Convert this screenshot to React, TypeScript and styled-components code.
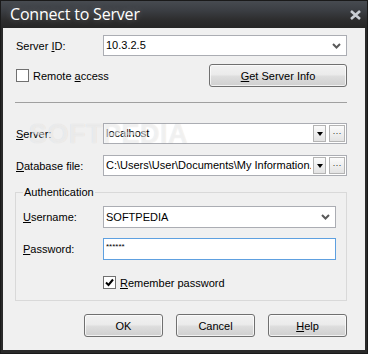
import styled, { createGlobalStyle } from 'styled-components'

const GlobalStyle = createGlobalStyle`
  html, body {
    margin: 0;
    padding: 0;
    background: #2b2b2b;
  }
  * {
    box-sizing: border-box;
  }
`

const Window = styled.div`
  width: 368px;
  height: 354px;
  display: flex;
  flex-direction: column;
  background: #2a2a2a;
  border: 1px solid #1a1a1a;
  font-family: 'Liberation Sans', Arial, sans-serif;
  font-size: 11px;
  color: #000;
`

const TitleBar = styled.div`
  height: 27px;
  flex: none;
  display: flex;
  align-items: center;
  justify-content: space-between;
  padding: 0 5px 2px 9px;
  background: linear-gradient(#474b51 0%, #3b3e43 35%, #2d2d2e 70%, #262626 100%);
`

const Title = styled.span`
  font-family: 'Open Sans', 'Noto Sans', sans-serif;
  font-size: 16px;
  color: #ffffff;
  text-shadow: 0 0 6px rgba(255, 255, 255, 0.25);
  letter-spacing: -0.2px;
`

const Close = styled.svg`
  width: 13px;
  height: 10px;
  margin-top: 2px;
`

const Client = styled.div`
  position: relative;
  flex: 1;
  margin: 0 2px 3px 2px;
  background: #f0f0f0;
  display: flex;
  flex-direction: column;
  overflow: hidden;
`

const Row = styled.div<{ $mt: number; $h?: number }>`
  display: flex;
  align-items: center;
  margin-top: ${p => p.$mt}px;
  height: ${p => p.$h ?? 21}px;
  padding-left: 13px;
  padding-right: 18px;
`

const GroupRow = styled(Row)`
  padding-left: 7px;
  padding-right: 10px;
`

const Label = styled.span<{ $w: number }>`
  width: ${p => p.$w}px;
  flex: none;
  white-space: nowrap;
`

const Field = styled.div<{ $focus?: boolean }>`
  flex: 1;
  height: 100%;
  display: flex;
  align-items: center;
  background: #fff;
  border: 1px solid ${p => (p.$focus ? '#5ea0e0' : '#abadb3')};
  padding-left: 2px;
  min-width: 0;
  overflow: hidden;
`

const FieldText = styled.span<{ $small?: boolean }>`
  flex: 1;
  white-space: nowrap;
  overflow: hidden;
  font-size: ${p => (p.$small ? '8px' : '11px')};
  line-height: 1;
  padding-bottom: ${p => (p.$small ? '4px' : '0')};
`

const Chevron = styled.svg`
  width: 9px;
  height: 6px;
  margin-right: 5px;
  flex: none;
`

const MiniButton = styled.div<{ $w: number }>`
  width: ${p => p.$w}px;
  height: 17px;
  flex: none;
  margin-right: 1px;
  margin-left: 2px;
  border: 1px solid #b4b4b4;
  background: linear-gradient(#fbfbfb, #e3e3e3);
  display: flex;
  align-items: center;
  justify-content: center;
  font-size: 9px;
  color: #333;
  line-height: 1;
`

const Arrow = styled.div`
  width: 0;
  height: 0;
  border-left: 3.5px solid transparent;
  border-right: 3.5px solid transparent;
  border-top: 4px solid #000;
  margin-top: 1px;
`

const CheckRow = styled.label<{ $left: number }>`
  display: flex;
  align-items: center;
  gap: 4px;
  padding-left: ${p => p.$left}px;
  white-space: nowrap;
`

const Box = styled.span`
  width: 13px;
  height: 13px;
  flex: none;
  border: 1px solid #707070;
  background: #fff;
  display: flex;
  align-items: center;
  justify-content: center;
`

const Spacer = styled.div`
  flex: 1;
`

const Button = styled.div<{ $w: number }>`
  width: ${p => p.$w}px;
  height: 23px;
  flex: none;
  border: 1px solid #707070;
  border-radius: 3px;
  background: linear-gradient(#f2f2f2 0%, #ebebeb 45%, #dddddd 55%, #cfcfcf 100%);
  box-shadow: inset 0 0 0 1px rgba(255, 255, 255, 0.7);
  display: flex;
  align-items: center;
  justify-content: center;
  font-size: 11px;
`

const Separator = styled.div`
  margin: 15px 18px 0 12px;
  height: 1px;
  background: #a0a0a0;
`

const Group = styled.div`
  position: relative;
  margin: 16px 18px 0 12px;
  border: 1px solid #d9d9d9;
  padding: 13px 0 11px;
  display: flex;
  flex-direction: column;
`

const Legend = styled.span`
  position: absolute;
  top: -7px;
  left: 7px;
  padding: 0 1px;
  background: #f0f0f0;
  line-height: 13px;
`

const Footer = styled.div`
  display: flex;
  justify-content: flex-end;
  gap: 13px;
  margin-top: 13px;
  padding-right: 18px;
`

const Watermark = styled.div`
  position: absolute;
  left: 26px;
  top: 91px;
  font-family: 'Liberation Sans', Arial, sans-serif;
  font-weight: bold;
  font-size: 27px;
  letter-spacing: 0.5px;
  color: rgba(255, 255, 255, 0.55);
  text-shadow: 0 0 1px rgba(0, 0, 0, 0.12);
  pointer-events: none;
`

const ChevronIcon = () => (
  <Chevron viewBox="0 0 9 6">
    <path d="M1 1 L4.5 4.5 L8 1" fill="none" stroke="#5a5a5a" strokeWidth="2" />
  </Chevron>
)

const CheckMark = () => (
  <svg width="9" height="9" viewBox="0 0 9 9">
    <path d="M1 4.5 L3.5 7 L8 1.5" fill="none" stroke="#000" strokeWidth="2" />
  </svg>
)

export default function App() {
  return (
    <>
      <GlobalStyle />
      <Window>
        <TitleBar>
          <Title>Connect to Server</Title>
          <Close viewBox="0 0 13 10">
            <path d="M2 1 L11 9 M11 1 L2 9" stroke="#c9ced4" strokeWidth="2.6" />
          </Close>
        </TitleBar>
        <Client>
          <Row $mt={7}>
            <Label $w={87}>Server <u>I</u>D:</Label>
            <Field>
              <FieldText>10.3.2.5</FieldText>
              <ChevronIcon />
            </Field>
          </Row>
          <Row $mt={8} $h={23}>
            <CheckRow $left={0}>
              <Box />
              <span>Remote <u>a</u>ccess</span>
            </CheckRow>
            <Spacer />
            <Button $w={138}>
              <span><u>G</u>et Server Info</span>
            </Button>
          </Row>
          <Separator />
          <Row $mt={20}>
            <Label $w={87}><u>S</u>erver:</Label>
            <Field>
              <FieldText>localhost</FieldText>
              <MiniButton $w={13}><Arrow /></MiniButton>
              <MiniButton $w={16}>···</MiniButton>
            </Field>
          </Row>
          <Row $mt={11}>
            <Label $w={87}><u>D</u>atabase file:</Label>
            <Field>
              <FieldText>C:\Users\User\Documents\My Information.</FieldText>
              <MiniButton $w={13}><Arrow /></MiniButton>
              <MiniButton $w={16}>···</MiniButton>
            </Field>
          </Row>
          <Group>
            <Legend>Authentication</Legend>
            <GroupRow $mt={0} $h={22}>
              <Label $w={80}><u>U</u>sername:</Label>
              <Field>
                <FieldText>SOFTPEDIA</FieldText>
                <ChevronIcon />
              </Field>
            </GroupRow>
            <GroupRow $mt={10} $h={22}>
              <Label $w={80}><u>P</u>assword:</Label>
              <Field $focus>
                <FieldText $small>******</FieldText>
              </Field>
            </GroupRow>
            <GroupRow $mt={16} $h={13}>
              <CheckRow $left={80}>
                <Box><CheckMark /></Box>
                <span><u>R</u>emember password</span>
              </CheckRow>
            </GroupRow>
          </Group>
          <Footer>
            <Button $w={79}>OK</Button>
            <Button $w={79}>Cancel</Button>
            <Button $w={79}><span><u>H</u>elp</span></Button>
          </Footer>
          <Watermark>SOFTPEDIA</Watermark>
        </Client>
      </Window>
    </>
  )
}
